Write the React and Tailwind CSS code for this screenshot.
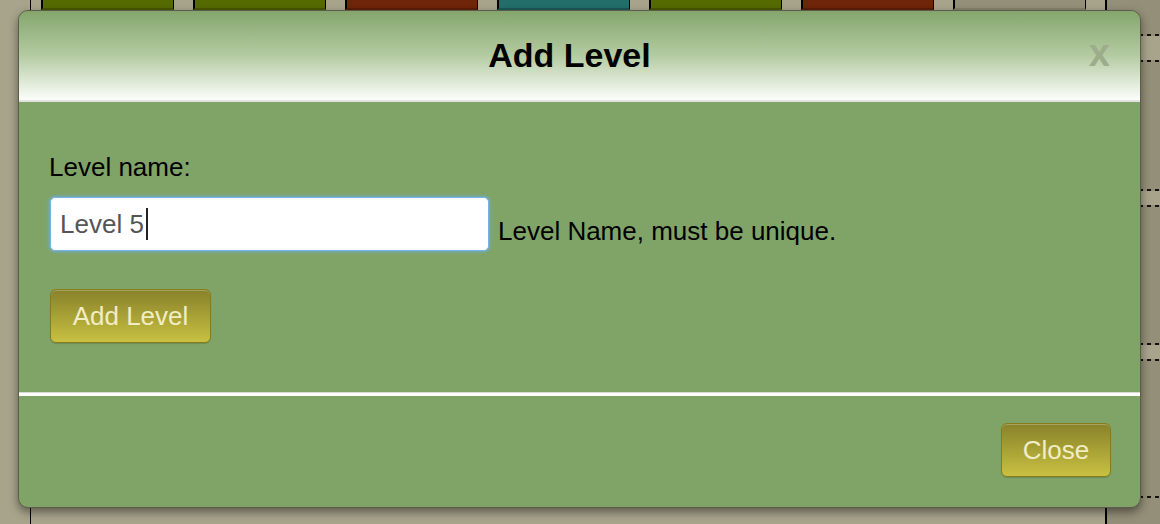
const stripCells = [
  { bg: "bg-[#566a02]", edge: "border-b-[#475700]" },
  { bg: "bg-[#566a02]", edge: "border-b-[#475700]" },
  { bg: "bg-[#6f2509]", edge: "border-b-[#5a1d06]" },
  { bg: "bg-[#236e6b]", edge: "border-b-[#1b5856]" },
  { bg: "bg-[#566a02]", edge: "border-b-[#475700]" },
  { bg: "bg-[#6f2509]", edge: "border-b-[#5a1d06]" },
  { bg: "bg-[#948f78]", edge: "border-b-[#868169]" },
];

function Dashes() {
  return <div className="h-[2px] bg-[repeating-linear-gradient(90deg,#111_0_4px,transparent_4px_8px)]" />;
}

function GoldButton({ children, className }) {
  return (
    <button
      className={
        "rounded-[6px] border border-[#857d1c] bg-gradient-to-b from-[#89822a] to-[#c8c142] text-[26px] text-[#f1edc4] shadow-[inset_0_1px_0_rgba(255,255,255,0.25),0_1px_1px_rgba(0,0,0,0.15)] " +
        className
      }
    >
      {children}
    </button>
  );
}

export default function App() {
  return (
    <div className="relative flex h-[524px] w-[1160px] overflow-hidden bg-[#a8a48c] font-['Liberation_Sans',Arial,sans-serif]">
      {/* page behind the dialog */}
      <div className="w-[30px]" />
      <div className="w-[1px] bg-black" />
      <div className="w-[10px]" />
      <div className="flex w-[1064px] flex-col">
        <div className="flex h-[10px]">
          {stripCells.map((c, i) => (
            <div key={i} className="flex">
              <div className={"h-full w-[133px] border-l-2 border-r border-b-2 border-l-black border-r-black " + c.bg + " " + c.edge} />
              {i < stripCells.length - 1 && <div className="w-[19px]" />}
            </div>
          ))}
        </div>
      </div>
      <div className="flex w-[55px] flex-col border-l-2 border-black bg-[#948f78]">
        <div className="h-[34px]" />
        <Dashes />
        <div className="h-[24px] bg-[#a8a48c]" />
        <Dashes />
        <div className="h-[127px]" />
        <Dashes />
        <div className="h-[14px] bg-[#a8a48c]" />
        <Dashes />
        <div className="h-[136px]" />
        <Dashes />
        <div className="h-[14px] bg-[#a8a48c]" />
        <Dashes />
        <div className="h-[135px]" />
        <Dashes />
      </div>

      {/* modal dialog */}
      <div className="absolute left-[18px] top-[10px] flex h-[498px] w-[1123px] flex-col overflow-hidden rounded-[10px] border border-[#5d5c4c] bg-[#80a468] shadow-[0_4px_10px_rgba(0,0,0,0.45)]">
        <div className="grid h-[89px] grid-cols-[1fr_auto_1fr] items-center bg-gradient-to-b from-[#84a66c] via-[#b4cba2] to-[#fdfefc] pr-[20px]">
          <div />
          <h1 className="text-[34px] font-bold text-black">Add Level</h1>
          <div className="flex justify-end">
            <span className="mb-[6px] pr-[10px] text-[38px] font-bold leading-none text-[#9dad8c]">x</span>
          </div>
        </div>
        <div className="h-[2px] bg-[#e1e3de]" />

        <div className="h-[290px] pl-[31px] pt-[50px]">
          <div className="-ml-[1px] text-[26px] leading-[30px] text-black">Level name:</div>
          <div className="mt-[15px] flex items-end">
            <div className="flex h-[54px] w-[439px] items-center rounded-[5px] border border-[#74b2ea] bg-white pl-[9px] shadow-[0_0_3px_1px_rgba(110,175,240,0.7)]">
              <span className="text-[26px] text-[#555]">Level 5</span>
              <span className="ml-[2px] h-[32px] w-[2px] bg-[#222]" />
            </div>
            <span className="ml-[9px] pb-[5px] text-[26px] leading-[30px] text-black">Level Name, must be unique.</span>
          </div>
          <GoldButton className="mt-[38px] h-[54px] w-[161px]">Add Level</GoldButton>
        </div>

        <div className="h-[1px] bg-[#d8dbd4]" />
        <div className="h-[3px] bg-white" />

        <div className="flex flex-1 items-start justify-end pr-[29px] pt-[27px]">
          <GoldButton className="h-[54px] w-[110px]">Close</GoldButton>
        </div>
      </div>
    </div>
  );
}
